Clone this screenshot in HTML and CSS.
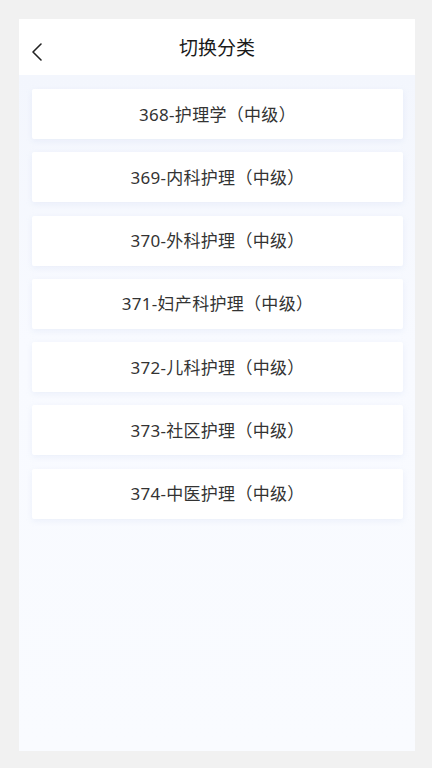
FILE: index.html
```html
<!DOCTYPE html>
<html lang="zh">
<head>
<meta charset="utf-8">
<link rel="stylesheet" href="styles.css">
</head>
<body>
<div class="panel">
  <header class="header">
    <span class="back">
      <svg width="14" height="20" viewBox="0 0 14 20"><path d="M11 2 L3 10 L11 18" fill="none" stroke="#222" stroke-width="1.6" stroke-linecap="round" stroke-linejoin="round"/></svg>
    </span>
    <h1 class="title">切换分类</h1>
  </header>
  <main class="list">
    <div class="item">368-护理学（中级）</div>
    <div class="item">369-内科护理（中级）</div>
    <div class="item">370-外科护理（中级）</div>
    <div class="item">371-妇产科护理（中级）</div>
    <div class="item">372-儿科护理（中级）</div>
    <div class="item">373-社区护理（中级）</div>
    <div class="item">374-中医护理（中级）</div>
  </main>
</div>
</body>
</html>
```

FILE: styles.css
```css
html, body {
  margin: 0;
  padding: 0;
  background: #f1f1f1;
  font-family: "Noto Sans", "Noto Sans CJK SC", sans-serif;
}
.panel {
  margin: 19px 17px 17px 19px;
  height: 732px;
  display: flex;
  flex-direction: column;
  background: #f7f9fe;
}
.header {
  height: 56px;
  flex: none;
  background: #ffffff;
  display: flex;
  align-items: center;
  justify-content: center;
  position: relative;
}
.back {
  position: absolute;
  left: 11px;
  top: 23px;
  width: 14px;
  height: 20px;
  display: block;
}
.back svg { display: block; }
.title {
  margin: 2px 0 0;
  font-size: 19px;
  font-weight: 400;
  color: #1a1a1a;
  line-height: 1;
}
.list {
  flex: 1;
  padding: 14px 12px 0 13px;
  display: flex;
  flex-direction: column;
  gap: 13.3px;
  background: linear-gradient(#f3f6fd, #f8faff 40%, #f9fbff);
}
.item {
  height: 50px;
  background: #ffffff;
  border-radius: 2px;
  box-shadow: 0 2px 6px rgba(180, 195, 230, 0.18);
  display: flex;
  align-items: center;
  justify-content: center;
  font-size: 17px;
  letter-spacing: 0.3px;
  color: #333333;
  line-height: 1;
}
```
